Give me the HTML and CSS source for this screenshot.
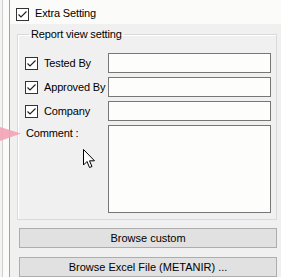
FILE: index.html
```html
<!DOCTYPE html>
<html lang="en">
<head>
    <meta charset="UTF-8">
    <meta name="viewport" content="width=device-width, initial-scale=1.0">
    <title>Extra Setting</title>
<link rel="stylesheet" href="styles.css">
</head>
<body>

<div class="window">
  <div class="edge"></div>

  <div class="main">
    <label class="check top-check">
      <span class="box"><svg width="13" height="13" viewBox="0 0 13 13"><polyline points="2.5,6.5 5,9 10.5,3.5" fill="none" stroke="#222" stroke-width="1.2"/></svg></span>
      Extra Setting
    </label>

    <div class="panel">
      <fieldset class="group">
        <legend>Report view setting</legend>
        <div class="fields">
          <label class="check">
            <span class="box"><svg width="13" height="13" viewBox="0 0 13 13"><polyline points="2.5,6.5 5,9 10.5,3.5" fill="none" stroke="#222" stroke-width="1.2"/></svg></span>
            Tested By
          </label>
          <input type="text" class="field">

          <label class="check">
            <span class="box"><svg width="13" height="13" viewBox="0 0 13 13"><polyline points="2.5,6.5 5,9 10.5,3.5" fill="none" stroke="#222" stroke-width="1.2"/></svg></span>
            Approved By
          </label>
          <input type="text" class="field">

          <label class="check">
            <span class="box"><svg width="13" height="13" viewBox="0 0 13 13"><polyline points="2.5,6.5 5,9 10.5,3.5" fill="none" stroke="#222" stroke-width="1.2"/></svg></span>
            Company
          </label>
          <input type="text" class="field">

          <span class="comment-label">Comment :</span>
          <textarea class="field comment"></textarea>
        </div>
      </fieldset>

      <button class="btn">Browse custom</button>
      <button class="btn">Browse Excel File (METANIR) ...</button>
    </div>
  </div>

  <!-- pink pointer from the video overlay -->
  <svg class="pointer" width="24" height="18" viewBox="0 0 24 18">
    <polygon points="0,1 21,7.5 0,15" fill="#f3a3b6" opacity="0.9"/>
  </svg>

  <!-- mouse cursor -->
  <svg class="cursor" width="13" height="20" viewBox="0 0 13 20">
    <path d="M0.5,0.5 L0.5,16 L4,12.5 L6.5,18.5 L9,17.5 L6.5,11.8 L11.5,11.8 Z" fill="#fff" stroke="#000" stroke-width="1" stroke-linejoin="miter"/>
  </svg>
</div>

</body>
</html>
```

FILE: styles.css
```css
* { box-sizing: border-box }

body {
  margin: 0;
  font-family: "Liberation Sans", Arial, sans-serif;
  font-size: 11px;
  letter-spacing: -0.15px;
  color: #000;
  background: #fbfbf9;
  overflow: hidden;
}

.window {
  position: relative;
  display: flex;
  width: 281px;
  height: 277px;
  overflow: hidden;
}

.edge {
  width: 10px;
  flex: none;
  border-right: 1px solid #a3a3a3;
  background: linear-gradient(to right, #f4f4f4 2px, #cfcfcf 2px, #cfcfcf 3px, #fbfbf9 3px);
}

.main {
  flex: 1;
  display: flex;
  flex-direction: column;
}

.check {
  display: flex;
  align-items: center;
  gap: 6px;
  height: 20px;
  white-space: nowrap;
}

.box {
  width: 13px;
  height: 13px;
  flex: none;
  border: 1px solid #333;
  background: #fff;
  display: flex;
}

.box svg {
  margin: -1px;
}

.top-check {
  height: 27px;
  padding: 0 0 0 6px;
  align-items: flex-start;
  padding-top: 7px;
}

.top-check .box {
  margin-top: 1px;
}

.panel {
  flex: 1;
  background: #f0f0f0;
  padding-top: 4px;
}

.group {
  margin: 0 5px 0 7px;
  padding: 12px 5px 6px 7px;
  border: 1px solid #d9d9d9;
  box-shadow: inset 1px 1px 0 #fff;
}

.group legend {
  margin-left: 4px;
  padding: 0 2px;
  line-height: 13px;
}

.fields {
  display: grid;
  grid-template-columns: 83px 163px;
  grid-template-rows: 20px 20px 20px 88px;
  row-gap: 4px;
}

.field {
  height: 20px;
  margin: 0;
  padding: 2px 3px;
  border: 1px solid #777;
  background: #fdfdfb;
  font: inherit;
  outline: none;
  resize: none;
}

.comment-label {
  padding: 2px 0 0 1px;
}

.field.comment {
  height: 88px;
}

.btn {
  display: block;
  width: 258px;
  height: 20px;
  margin: 8px 0 0 9px;
  padding: 0;
  border: 1px solid #adadad;
  background: #e1e1e1;
  font: inherit;
  color: #000;
}

.btn + .btn {
  margin-top: 9px;
}

.pointer {
  position: absolute;
  left: 0;
  top: 126px;
}

.cursor {
  position: absolute;
  left: 83px;
  top: 149px;
}
```
